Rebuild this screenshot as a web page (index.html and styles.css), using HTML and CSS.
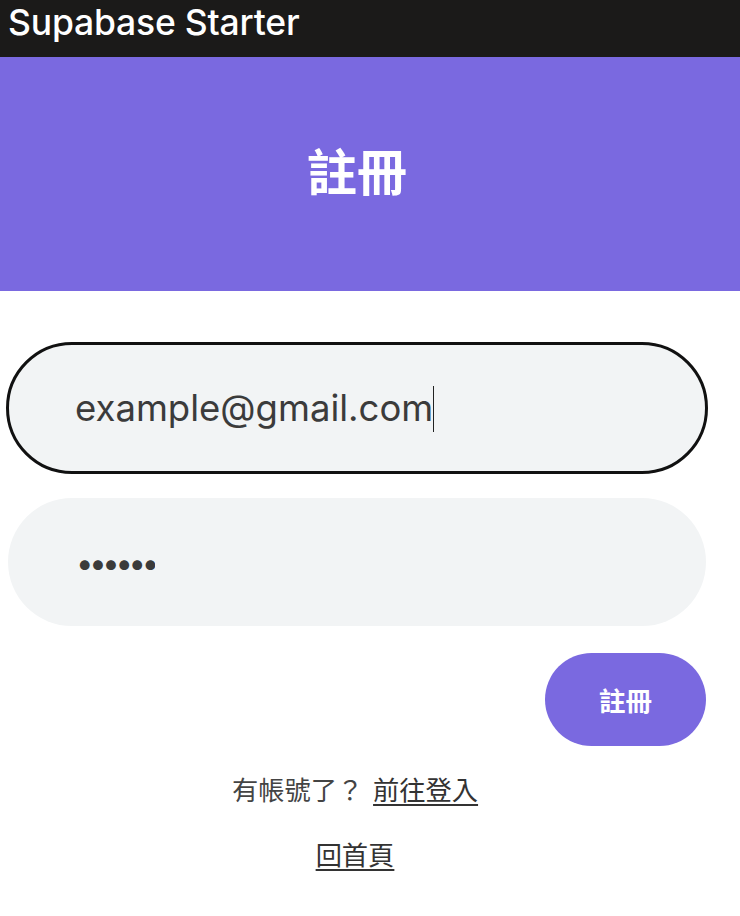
FILE: index.html
```html
<!DOCTYPE html>
<html lang="zh-Hant">
<head>
<meta charset="utf-8">
<title>註冊 - Supabase Starter</title>
<link rel="stylesheet" href="styles.css">
</head>
<body>
<header class="topbar">
  <span class="brand">Supabase Starter</span>
</header>
<section class="hero">
  <h1 class="hero-title">註冊</h1>
</section>
<main class="page">
  <form class="signup-form">
    <label class="field is-focused">
      <input class="field-input" type="email" value="example@gmail.com" aria-label="Email">
      <span class="caret"></span>
    </label>
    <label class="field">
      <input class="field-input field-password" type="password" value="123456" aria-label="密碼">
    </label>
    <div class="actions">
      <button class="btn-primary" type="button">註冊</button>
    </div>
  </form>
  <div class="links">
    <p class="switch-line">有帳號了？ <a class="text-link login-link" href="#">前往登入</a></p>
    <p class="home-line"><a class="text-link" href="#">回首頁</a></p>
  </div>
</main>
</body>
</html>
```
FILE: styles.css
```css
* { box-sizing: border-box; }

html, body {
  margin: 0;
  background: #ffffff;
}

body {
  font-family: "Inter", "Noto Sans CJK TC", sans-serif;
  color: #3b3b3b;
}

.topbar {
  height: 57px;
  background: #1b1a19;
  padding: 0 8px;
  display: flex;
  align-items: flex-start;
}

.brand {
  color: #ffffff;
  font-size: 35.5px;
  font-weight: 500;
  line-height: 46px;
  letter-spacing: -0.2px;
}

.hero {
  height: 234px;
  background: #7a69e0;
  display: flex;
  align-items: center;
  justify-content: center;
  padding: 0 26px 10px 0;
}

.hero-title {
  margin: 0;
  color: #ffffff;
  font-family: "Noto Sans CJK TC", sans-serif;
  font-size: 50px;
  font-weight: 700;
  line-height: 1;
}

.page {
  width: 698px;
  margin-left: 8px;
  padding-top: 53px;
}

.signup-form {
  display: flex;
  flex-direction: column;
  gap: 26px;
}

.field {
  height: 128px;
  border-radius: 64px;
  background: #f2f4f5;
  padding-left: 67px;
  display: flex;
  align-items: center;
}

.field.is-focused {
  outline: 3px solid #111111;
  outline-offset: -1px;
}

.field-input {
  border: 0;
  outline: 0;
  background: transparent;
  padding: 0;
  margin: 0;
  font-family: "Inter", sans-serif;
  font-size: 36.5px;
  color: #3b3b3b;
  field-sizing: content;
  min-width: 0;
}

.field-password {
  font-size: 31px;
  letter-spacing: -4.3px;
  margin-left: 1px;
}

.caret {
  width: 1px;
  height: 46px;
  background: #222222;
  margin-top: 2px;
}

.actions {
  display: flex;
  justify-content: flex-end;
  margin-top: 1px;
}

.btn-primary {
  width: 161px;
  height: 93px;
  border: 0;
  border-radius: 47px;
  background: #7a69e0;
  color: #ffffff;
  font-family: "Noto Sans CJK TC", sans-serif;
  font-size: 26.5px;
  font-weight: 700;
  cursor: pointer;
}

.links {
  padding-right: 4px;
}

.switch-line,
.home-line {
  margin: 0;
  text-align: center;
  font-family: "Noto Sans CJK TC", sans-serif;
  font-size: 26.25px;
  line-height: 39px;
  color: #444444;
}

.switch-line { margin-top: 24px; }
.home-line { margin-top: 26px; }

.login-link {
  margin-left: 4px;
}

.text-link {
  color: #333333;
  text-decoration: underline;
  text-underline-offset: 4px;
  text-decoration-thickness: 2px;
}
```
